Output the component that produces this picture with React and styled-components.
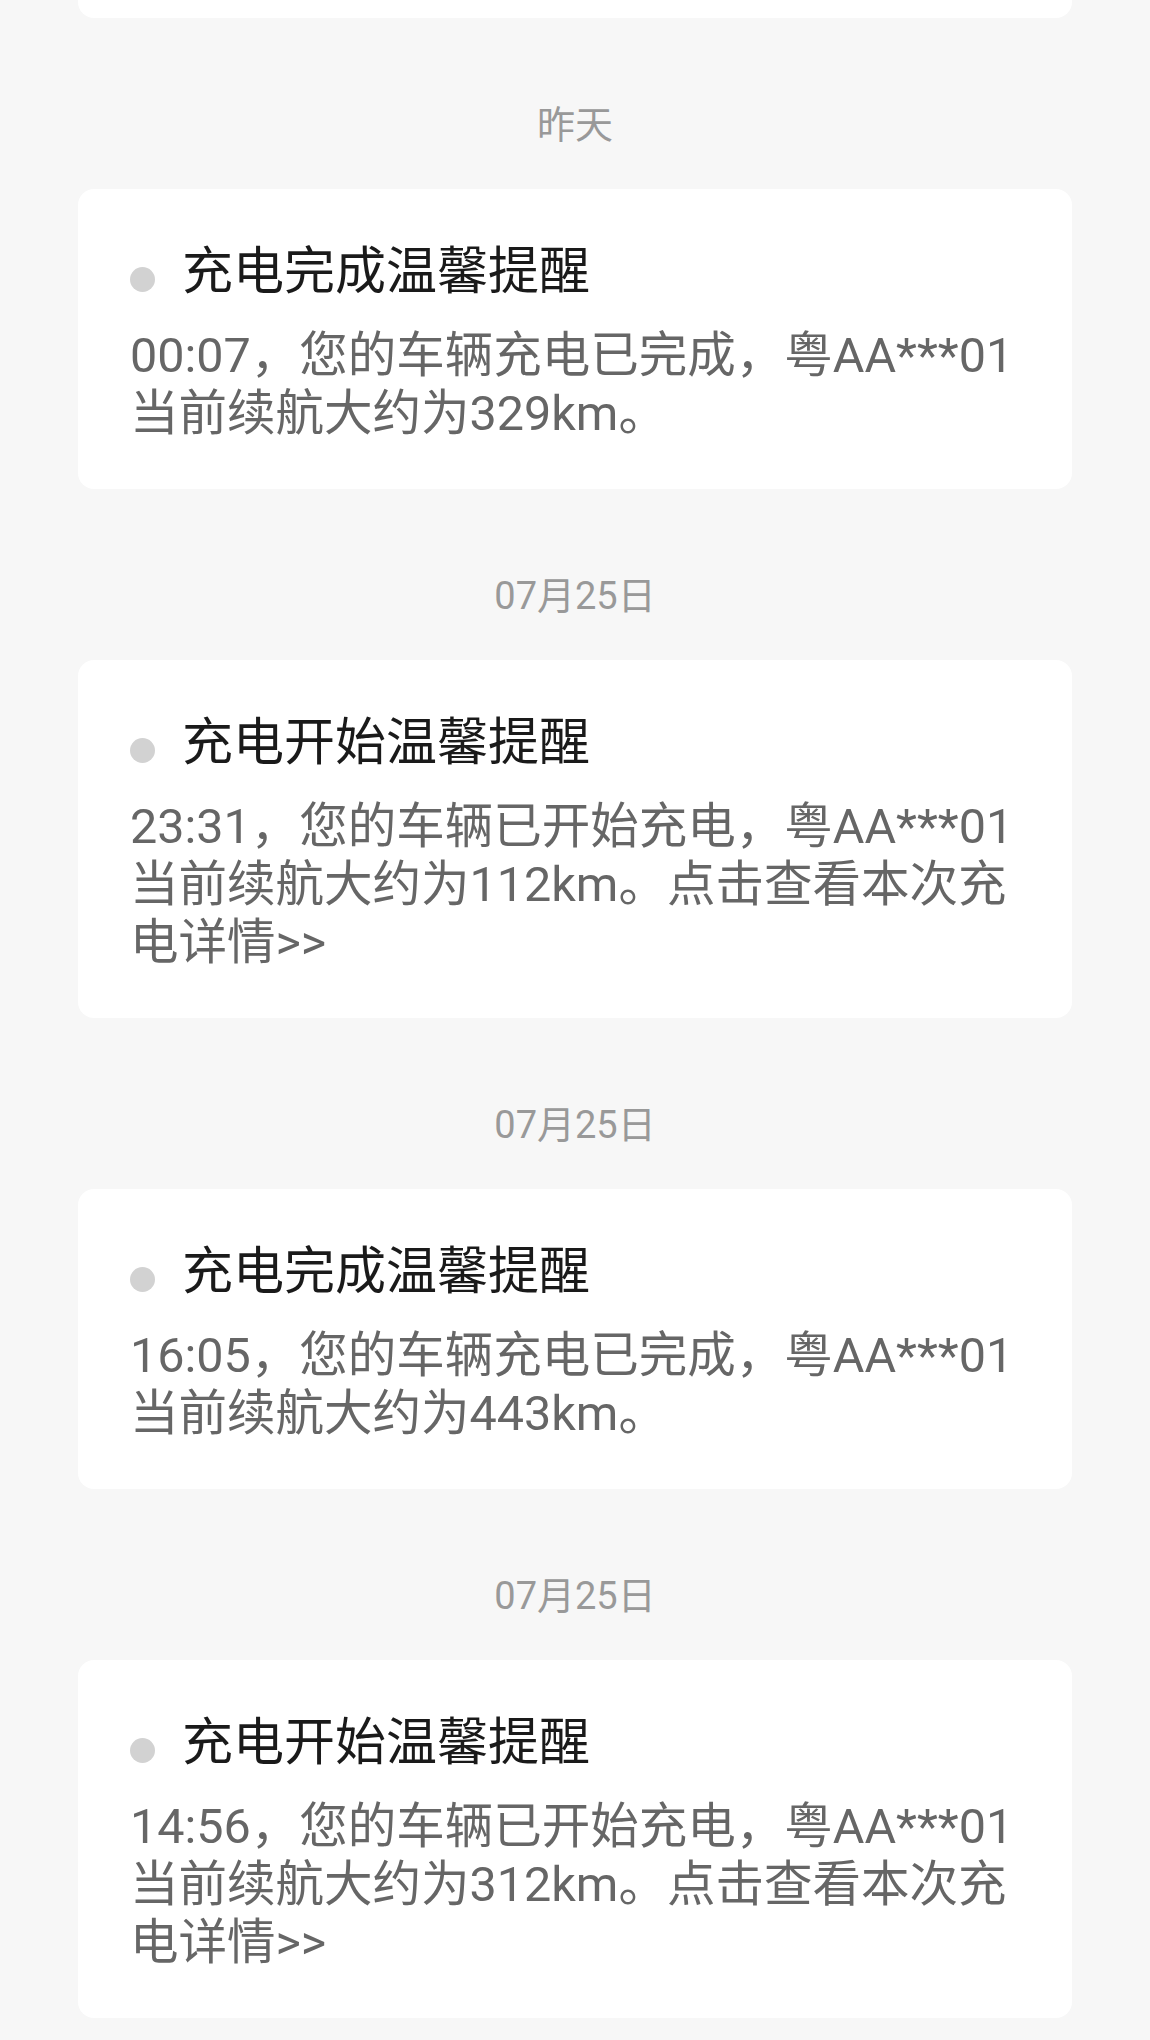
import React from 'react';
import styled, { createGlobalStyle } from 'styled-components';

const GlobalStyle = createGlobalStyle`
  html, body {
    margin: 0;
    padding: 0;
    background: #f7f7f7;
  }
  body {
    font-family: Roboto, "Noto Sans CJK SC", sans-serif;
  }
`

const Page = styled.div`
  padding: 0 78px;
  min-height: 2040px;
  box-sizing: border-box;
  background: #f7f7f7;
`

const CardTail = styled.div`
  height: 18px;
  background: #ffffff;
  border-radius: 0 0 16px 16px;
`

const DateLabel = styled.div`
  margin: 83px 0 40px;
  height: 48px;
  line-height: 48px;
  text-align: center;
  font-size: 38px;
  color: #999999;
`

const Card = styled.div`
  background: #ffffff;
  border-radius: 16px;
  padding: 52px 52px 46px;
`

const TitleRow = styled.div`
  display: flex;
  align-items: center;
  gap: 27px;
  margin-bottom: 25px;
`

const Dot = styled.span`
  flex: none;
  width: 25px;
  height: 25px;
  margin-top: 16px;
  border-radius: 50%;
  background: ${props => props.read ? '#d2d2d2' : '#ff5a4e'};
`

const Title = styled.div`
  font-size: 51px;
  line-height: 61px;
  color: #1a1a1a;
`

const Body = styled.div`
  font-size: 48.5px;
  line-height: 58px;
  color: #666666;
`

const messages = [
  {
    date: '昨天',
    title: '充电完成温馨提醒',
    text: '00:07，您的车辆充电已完成，粤AA***01当前续航大约为329km。',
  },
  {
    date: '07月25日',
    title: '充电开始温馨提醒',
    text: '23:31，您的车辆已开始充电，粤AA***01当前续航大约为112km。点击查看本次充电详情>>',
  },
  {
    date: '07月25日',
    title: '充电完成温馨提醒',
    text: '16:05，您的车辆充电已完成，粤AA***01当前续航大约为443km。',
  },
  {
    date: '07月25日',
    title: '充电开始温馨提醒',
    text: '14:56，您的车辆已开始充电，粤AA***01当前续航大约为312km。点击查看本次充电详情>>',
  },
]

export default function App() {
  return (
    <Page>
      <GlobalStyle />
      <CardTail />
      {messages.map((m, i) => (
        <div key={i}>
          <DateLabel>{m.date}</DateLabel>
          <Card>
            <TitleRow>
              <Dot read />
              <Title>{m.title}</Title>
            </TitleRow>
            <Body>{m.text}</Body>
          </Card>
        </div>
      ))}
    </Page>
  );
}
